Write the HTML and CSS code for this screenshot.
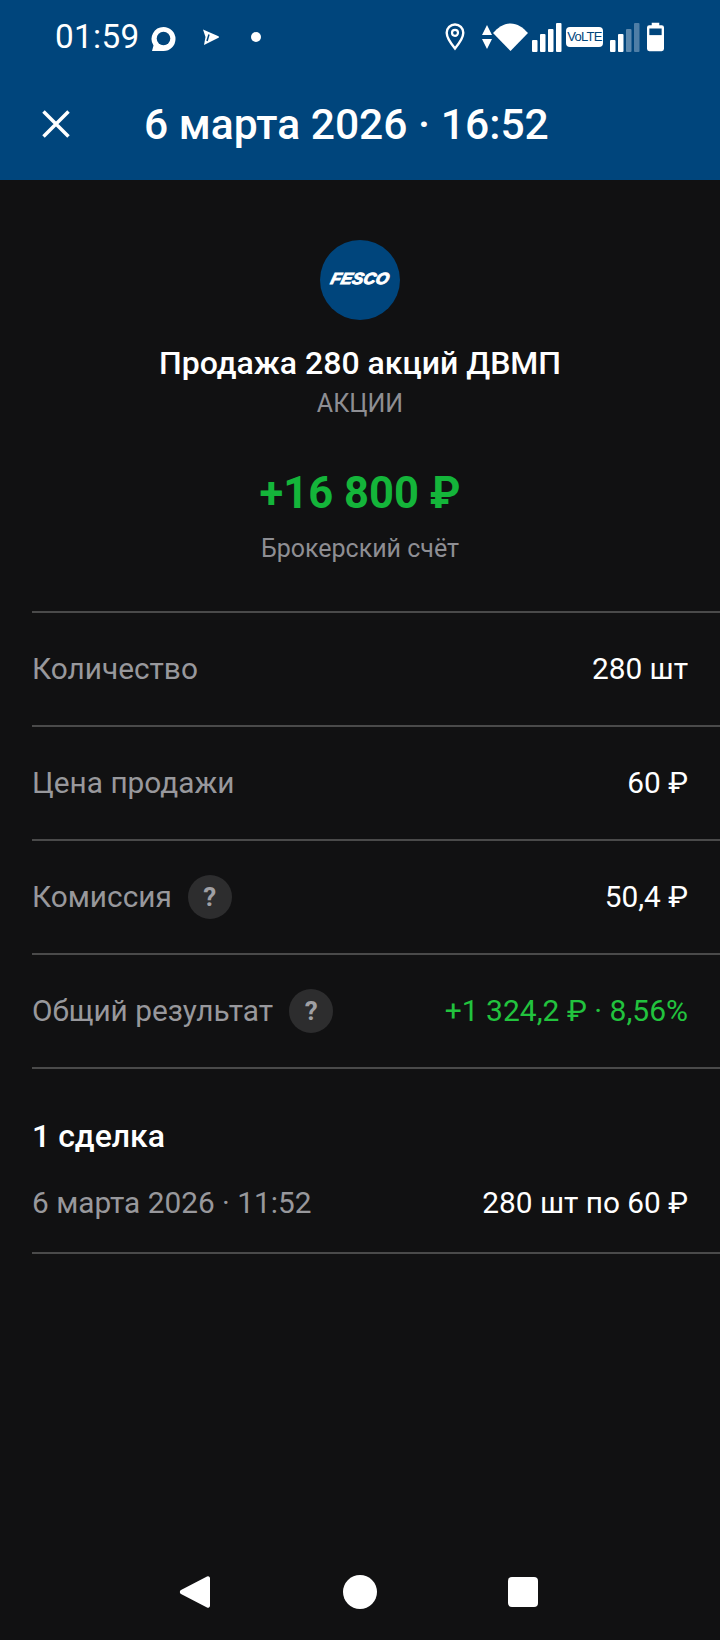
FILE: index.html
```html
<!DOCTYPE html>
<html lang="ru">
<head>
<meta charset="utf-8">
<title>Продажа</title>
<link rel="stylesheet" href="styles.css">
</head>
<body>
<div class="page">
  <header class="header">
    <div class="status">
      <div class="status-left">
        <span class="time">01:59</span>
        <svg class="ic-chat" viewBox="0 0 26 26"><path d="M13.500 1a12 12 0 0 1 0 24H2l1.500-5.500A12 12 0 0 1 13.500 1z" fill="#fff"/><circle cx="13.500" cy="12.500" r="6.800" fill="#00457c"/></svg>
        <svg class="ic-play" viewBox="0 0 16 16"><path d="M0 0.500L15.500 7.200Q16.500 8 15.500 8.800L1 16 2.500 8z" fill="#fff"/><path d="M6 5.500L4 12" stroke="#00457c" stroke-width="1.500" fill="none"/></svg>
        <span class="dot"></span>
      </div>
      <div class="status-right">
        <svg class="ic-pin" viewBox="0 0 20 28"><path d="M10 1.500a8.300 8.300 0 0 1 8.300 8.300c0 5.700-8.300 15.700-8.300 15.700S1.700 15.500 1.700 9.800A8.300 8.300 0 0 1 10 1.500z" fill="none" stroke="#fff" stroke-width="2.400"/><circle cx="10" cy="9.800" r="3" fill="none" stroke="#fff" stroke-width="2.200"/></svg>
        <svg class="ic-arrows" viewBox="0 0 10 24"><path d="M5 0l5 10H0zM5 24L0 14h10z" fill="#fff"/></svg>
        <svg class="ic-wifi" viewBox="0 0 36 30"><path d="M18 29.500L0 11C5 5 11 1 18 1s13 4 18 10z" fill="#fff"/></svg>
        <svg class="ic-bars" viewBox="0 0 30 29"><rect x="0" y="17" width="5.500" height="12" rx="1" fill="#fff"/><rect x="8" y="11" width="5.500" height="18" rx="1" fill="#fff"/><rect x="16" y="6" width="5.500" height="23" rx="1" fill="#fff"/><rect x="24" y="0" width="5.500" height="29" rx="1" fill="#fff"/></svg>
        <span class="volte">VoLTE</span>
        <svg class="ic-bars2" viewBox="0 0 30 29"><rect x="0" y="17" width="5.500" height="12" rx="1" fill="#fff"/><rect x="8" y="11" width="5.500" height="18" rx="1" fill="#fff"/><rect x="16" y="6" width="5.500" height="23" rx="1" fill="#5c88ad"/><rect x="24" y="0" width="5.500" height="29" rx="1" fill="#4f7ea6"/></svg>
        <svg class="ic-batt" viewBox="0 0 18 30"><path d="M5 0h8v2.500h2.500A2.500 2.500 0 0 1 18 5v22.500a2.500 2.500 0 0 1-2.500 2.500h-13A2.500 2.500 0 0 1 0 27.500V5a2.500 2.500 0 0 1 2.500-2.500H5z" fill="#fff"/><rect x="2.500" y="6" width="13" height="7" fill="#00457c"/></svg>
      </div>
    </div>
    <div class="toolbar">
      <svg class="ic-close" viewBox="0 0 28 28"><path d="M1.500 1.500l25 25M26.500 1.500l-25 25" stroke="#fff" stroke-width="3.500" fill="none"/></svg>
      <h1 class="toolbar-title">6 марта 2026 · 16:52</h1>
    </div>
  </header>

  <section class="summary">
    <div class="logo"><span class="logo-text">fesco</span></div>
    <div class="op-title">Продажа 280 акций ДВМП</div>
    <div class="op-type">АКЦИИ</div>
    <div class="amount">+16 800 ₽</div>
    <div class="account">Брокерский счёт</div>
  </section>

  <section class="rows">
    <div class="row"><span class="label">Количество</span><span class="value">280 шт</span></div>
    <div class="row"><span class="label">Цена продажи</span><span class="value">60 ₽</span></div>
    <div class="row"><span class="label">Комиссия<span class="help">?</span></span><span class="value">50,4 ₽</span></div>
    <div class="row"><span class="label">Общий результат<span class="help">?</span></span><span class="value green">+1 324,2 ₽ · 8,56%</span></div>
  </section>

  <section class="deals">
    <h2 class="deals-title">1 сделка</h2>
    <div class="deal"><span class="label">6 марта 2026 · 11:52</span><span class="value">280 шт по 60 ₽</span></div>
  </section>

  <nav class="nav">
    <svg class="nav-back" viewBox="0 0 32 34"><path d="M28 1.500a2 2 0 0 1 3 1.700v27.600a2 2 0 0 1-3 1.700L2 19a2.300 2.300 0 0 1 0-4z" fill="#fff"/></svg>
    <span class="nav-home"></span>
    <span class="nav-recent"></span>
  </nav>
</div>
</body>
</html>
```
FILE: styles.css
```css
* { box-sizing: border-box; }
html, body { margin: 0; padding: 0; }
body { background: #111112; color: #fff; font-family: Roboto, "Noto Sans", sans-serif; }
.page { width: 720px; height: 1640px; display: flex; flex-direction: column; overflow: hidden; }

.header { height: 180px; background: #00457c; flex: none; }
.status { height: 74px; padding: 0 56px 0 55px; display: flex; justify-content: space-between; align-items: center; }
.status-left, .status-right { display: flex; align-items: center; }
.time { font-size: 33.3px; letter-spacing: 0.3px; line-height: 36px; }
.ic-chat { width: 26px; height: 26px; margin-left: 11px; margin-top: 3px; }
.ic-play { width: 16px; height: 16px; margin-left: 27px; }
.dot { width: 10px; height: 10px; border-radius: 50%; background: #fff; margin-left: 32px; }
.ic-pin { width: 20px; height: 28px; }
.ic-arrows { width: 10px; height: 24px; margin-left: 17px; }
.ic-wifi { width: 35px; height: 30px; margin-left: 1px; }
.ic-bars { width: 30px; height: 29px; margin-left: 4px; }
.volte { width: 37px; height: 20px; margin-left: 4px; background: #fff; border-radius: 4px; color: #00457c; font-family: "Liberation Sans", sans-serif; font-size: 13px; line-height: 20px; text-align: center; letter-spacing: -0.7px; overflow: hidden; }
.ic-bars2 { width: 30px; height: 29px; margin-left: 7px; }
.ic-batt { width: 17px; height: 30px; margin-left: 7px; }

.toolbar { height: 106px; padding: 0 0 6px 42px; display: flex; align-items: center; }
.ic-close { width: 28px; height: 28px; flex: none; }
.toolbar-title { margin: 0 0 0 74px; font-size: 42.6px; font-weight: 500; line-height: 48px; white-space: nowrap; }

.summary { display: flex; flex-direction: column; align-items: center; padding-top: 60px; height: 431px; flex: none; }
.logo { width: 80px; height: 80px; border-radius: 50%; background: #00457c; display: flex; align-items: center; justify-content: center; }
.logo-text { font-family: "Liberation Sans", sans-serif; font-size: 16px; font-weight: 700; font-style: italic; line-height: 16px; text-transform: uppercase; letter-spacing: 0.2px; -webkit-text-stroke: 1px #fff; margin-top: -2px; transform: skewX(-14deg) scaleX(1.04); }
.op-title { margin-top: 21px; font-size: 32px; font-weight: 500; line-height: 44px; }
.op-type { margin-top: 2px; font-size: 25px; line-height: 34px; color: #8e8e93; }
.amount { margin-top: 45px; font-size: 43.5px; font-weight: 700; line-height: 56px; color: #14b53a; }
.account { margin-top: 11px; font-size: 25px; line-height: 32px; color: #8e8e93; }

.rows { flex: none; margin-left: 32px; }
.row { height: 114px; border-top: 2px solid #4a4a4a; padding: 0 32px 1px 0; display: flex; align-items: center; justify-content: space-between; }
.row:last-child { border-bottom: 2px solid #4a4a4a; height: 116px; }
.label { display: flex; align-items: center; font-size: 29.8px; color: #98989c; }
.value { font-size: 29.8px; color: #fff; }
.value.green { font-size: 30px; color: #22c33e; }
.help { width: 44px; height: 44px; margin-left: 16px; border-radius: 50%; background: #2d2d2e; color: #a0a0a4; font-size: 26px; font-weight: 700; line-height: 44px; text-align: center; }

.deals { margin-left: 32px; flex: none; }
.deals-title { margin: 0; padding-top: 49px; font-size: 32px; font-weight: 500; line-height: 36px; color: #fff; }
.deal { height: 100px; padding: 0 32px 2px 0; border-bottom: 2px solid #4a4a4a; display: flex; align-items: center; justify-content: space-between; }

.nav { margin-top: auto; height: 96px; padding: 0 182px 0 179px; display: flex; align-items: center; justify-content: space-between; flex: none; }
.nav-back { width: 32px; height: 34px; }
.nav-home { width: 34px; height: 34px; border-radius: 50%; background: #fff; }
.nav-recent { width: 30px; height: 30px; border-radius: 4px; background: #fff; }
```
